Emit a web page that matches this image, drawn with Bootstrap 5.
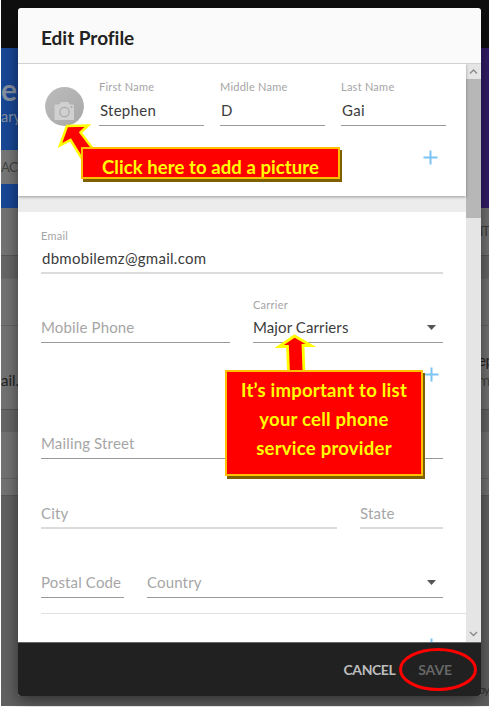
<!DOCTYPE html>
<html lang="en">
<head>
<meta charset="utf-8">
<meta name="viewport" content="width=device-width, initial-scale=1">
<title>Edit Profile</title>
<link href="https://cdn.jsdelivr.net/npm/bootstrap@5.3.0/dist/css/bootstrap.min.css" rel="stylesheet">
<style>
body{font-family:Lato,"Open Sans",sans-serif;background:#fff;color:#333;line-height:1}
.stage{width:489px;height:707px}
.page-back{left:1px;top:0;width:488px;height:706px;background:#616161}
.peek{line-height:20px;white-space:nowrap}
.top-bar{height:48px;background:#0f0f0f}
.hero{height:160px;background:linear-gradient(90deg,#184796 0,#173f88 50%,#321c6a 50%)}
.hero-line{color:#8590a0}
.hero-name{font-size:30px;margin-top:31px}
.hero-sub{font-size:14.5px;margin-top:8px}
.hero-btn{margin-top:23px;height:34px;line-height:34px;width:60px;background:#777;color:#444;font-size:13px;letter-spacing:-.6px}
.band{background:#737373}
.band-tabs{height:48px;line-height:47px;border-bottom:1px solid #575757;font-size:13px;letter-spacing:-1px;color:#3c3c3c;padding-right:0}
.band-gap{height:22px;background:#666}
.band-a{height:132px;border-top:1px solid #6a6a6a;border-bottom:1px solid #555}
.band-b{height:64px;border-bottom:1px solid #585858}
.band-rule{height:47px;border-bottom:1px solid #646464}
.ail{font-size:15px;color:#222;padding-top:20px}
.ep{width:11px;font-size:15px;color:#222;letter-spacing:-.5px}
.ep-two{color:#444}
.by-line{margin-top:184px;color:#333;font-size:12px;letter-spacing:-1px}
.dialog-box{left:18px;top:8px;width:463px;height:688px;border-radius:3px;background:#fff;box-shadow:0 5px 16px rgba(0,0,0,.5)}
.dialog-head{height:56px;background:#fafafa;border-bottom:1px solid #d2d2d2;padding:4px 0 0 23px}
.dialog-head h1{font-size:19px;font-weight:700;color:#222;letter-spacing:-.02px;line-height:1}
.dialog-body{height:578px}
.panel-one{height:132px;padding:0 20px 0 27px;box-shadow:0 1px 3px rgba(0,0,0,.35)}
.names{height:62px;gap:16px}
.names .avatar{margin-right:-1px}
.panel-gap{height:16px;background:#ececec}
.panel-two{padding:0 23px;height:430px}
.field{border-bottom:1px solid #999;padding-bottom:5px;min-width:0;white-space:nowrap}
.soft{border-bottom:2px solid #dcdcdc;padding-bottom:4px}
.lbl{font-size:11px;color:#a5a5a5;letter-spacing:.25px;line-height:14px;margin-bottom:6px}
.panel-two .lbl{margin-bottom:5px}
.val{font-size:15px;color:#3c3c3c;line-height:20px;letter-spacing:.27px;padding-left:1px}
.carrier{letter-spacing:.1px;padding-left:0}
.hint{font-size:15px;color:#a6a6a6;line-height:20px;letter-spacing:.15px}
.w105{width:105px}.w189{width:189px}.w296{width:296px}.w83{width:83px}
.r62{height:62px}.r70{height:70px}.r54{height:54px}.r69{height:69px}
.g23{gap:23px}
.plus-row{height:62px;padding-right:4px}
.panel-one .plus-row{padding-right:8px}
.plus-row svg{width:15px;height:15px;flex:none}
.rule{height:1px;background:#e1e1e1;margin:15px -23px 0 0}
.scroller{width:15px;background:#e5e5e5}
.thumb{height:139px;background:#b7b7b7}
.caret{width:9px;height:5px;margin-right:7px}
.dialog-foot{height:54px;background:#212121;border-top:1px solid #666;border-radius:0 0 3px 3px;padding-right:29px;gap:23px}
.foot-btn{font-size:14px;font-weight:700;color:#bdbdbd;background:none;border:0;padding:0;line-height:20px;letter-spacing:-.45px}
.foot-btn.off{color:#666;letter-spacing:-.1px}
.overlay{left:0;top:0;pointer-events:none}
.callout{background:#f00;border:2px solid #ffc000;color:#ff0;box-shadow:2px 3px 0 #7f6000;font-weight:700;font-size:18.5px;text-align:center;white-space:nowrap}
.c-one{left:81px;top:147px;width:259px;height:32px;line-height:36px;letter-spacing:.08px}
.c-two{left:225px;top:370px;width:198px;height:106px;line-height:29px;padding-top:4px;letter-spacing:.24px}
</style>
</head>
<body>
<div class="stage position-relative overflow-hidden">
  <div class="page-back position-absolute overflow-hidden" aria-hidden="true">
    <div class="top-bar"></div>
    <div class="hero d-flex flex-column">
      <div class="peek hero-line hero-name fw-bold">e</div>
      <div class="peek hero-line hero-sub">ary</div>
      <div class="peek hero-btn">ACT</div>
    </div>
    <div class="peek band band-tabs text-end">NT</div>
    <div class="band-gap"></div>
    <div class="band band-a">
      <div class="band-rule"></div>
      <div class="d-flex justify-content-between pt-4">
        <div class="peek ail">ail.</div>
        <div class="peek ep">ep<br><span class="ep-two">m</span></div>
      </div>
    </div>
    <div class="band-gap"></div>
    <div class="band band-b"><div class="band-rule"></div></div>
    <div class="peek by-line text-end">by</div>
  </div>

  <div class="dialog-box position-absolute d-flex flex-column">
    <div class="dialog-head d-flex align-items-center rounded-top"><h1 class="m-0">Edit Profile</h1></div>
    <div class="dialog-body d-flex overflow-hidden">
      <div class="flex-grow-1">
        <div class="panel-one position-relative">
          <div class="names d-flex align-items-end">
            <svg class="avatar flex-shrink-0" width="39" height="39" viewBox="0 0 39 39">
              <defs><linearGradient id="av" x1="0" y1="0" x2="1" y2="1"><stop offset="0" stop-color="#bcbcbc"/><stop offset="1" stop-color="#a8a8a8"/></linearGradient></defs>
              <circle cx="19.500" cy="19.500" r="19.400" fill="url(#av)"/>
              <path d="M10.500 17.500H14l2-2.500h7l2 2.500h3q1 0 1 1V33H9.500V18.500q0-1 1-1z" fill="#d0d0d0"/>
              <circle cx="19.500" cy="25" r="4.700" fill="none" stroke="#a9a9a9" stroke-width="1.200"/><circle cx="26.500" cy="20" r="1" fill="#a9a9a9"/>
            </svg>
            <div class="field w105"><div class="lbl">First Name</div><div class="val">Stephen</div></div>
            <div class="field w105"><div class="lbl">Middle Name</div><div class="val">D</div></div>
            <div class="field w105"><div class="lbl">Last Name</div><div class="val">Gai</div></div>
          </div>
          <div class="plus-row d-flex align-items-center justify-content-end"><svg viewBox="0 0 15 15"><path d="M7.500 .5v14M.5 7.500h14" stroke="#7cc4f4" stroke-width="2"/></svg></div>
        </div>
        <div class="panel-gap"></div>
        <div class="panel-two">
          <div class="r62 d-flex align-items-end"><div class="field soft flex-grow-1"><div class="lbl">Email</div><div class="val">dbmobilemz@gmail.com</div></div></div>
          <div class="r69 d-flex align-items-end g23">
            <div class="field w189"><div class="hint">Mobile Phone</div></div>
            <div class="field flex-grow-1"><div class="lbl">Carrier</div><div class="d-flex align-items-center justify-content-between"><span class="val carrier">Major Carriers</span><svg class="caret" viewBox="0 0 9 5"><path d="M0 0h9L4.500 5z" fill="#555"/></svg></div></div>
          </div>
          <div class="plus-row d-flex align-items-center justify-content-end"><svg viewBox="0 0 15 15"><path d="M7.500 .5v14M.5 7.500h14" stroke="#7cc4f4" stroke-width="2"/></svg></div>
          <div class="r54 d-flex align-items-end"><div class="field flex-grow-1"><div class="hint">Mailing Street</div></div></div>
          <div class="r70 d-flex align-items-end g23">
            <div class="field soft w296"><div class="hint">City</div></div>
            <div class="field soft flex-grow-1"><div class="hint">State</div></div>
          </div>
          <div class="r69 d-flex align-items-end g23">
            <div class="field w83"><div class="hint">Postal Code</div></div>
            <div class="field flex-grow-1 d-flex align-items-center justify-content-between"><span class="hint">Country</span><svg class="caret" viewBox="0 0 9 5"><path d="M0 0h9L4.500 5z" fill="#555"/></svg></div>
          </div>
          <div class="rule"></div>
          <div class="plus-row d-flex align-items-center justify-content-end"><svg viewBox="0 0 15 15"><path d="M7.500 .5v14M.5 7.500h14" stroke="#7cc4f4" stroke-width="2"/></svg></div>
        </div>
      </div>
      <div class="scroller d-flex flex-column flex-shrink-0">
        <svg width="15" height="15" viewBox="0 0 15 15"><path d="M4 9.500l3.500-3.500L11 9.500" fill="none" stroke="#888" stroke-width="1.300"/></svg>
        <div class="thumb"></div>
        <svg class="mt-auto" width="15" height="15" viewBox="0 0 15 15"><path d="M4 5l3.500 3.500L11 5" fill="none" stroke="#888" stroke-width="1.300"/></svg>
      </div>
    </div>
    <div class="dialog-foot d-flex align-items-center justify-content-end">
      <button class="foot-btn" type="button">CANCEL</button>
      <button class="foot-btn off" type="button">SAVE</button>
    </div>
  </div>

  <svg class="overlay position-absolute" width="489" height="707" viewBox="0 0 489 707">
    <path d="M67 126L88 125.500L80.500 132.500L96 153L84 162L70.500 140L60 145.500z" fill="#f00" stroke="#ff0" stroke-width="2.500"/>
    <path d="M294.500 336L311 345.500L303 345.500L304 372H288.500L287.500 346.500H279z" fill="#f00" stroke="#ff0" stroke-width="2.800"/>
    <ellipse cx="438" cy="669.500" rx="37.500" ry="20" fill="none" stroke="#f00" stroke-width="3"/>
  </svg>
  <div class="callout c-one position-absolute">Click here to add a picture</div>
  <div class="callout c-two position-absolute">It’s important to list<br>your cell phone<br>service provider</div>
</div>
<script src="https://cdn.jsdelivr.net/npm/bootstrap@5.3.0/dist/js/bootstrap.bundle.min.js"></script>
</body>
</html>
